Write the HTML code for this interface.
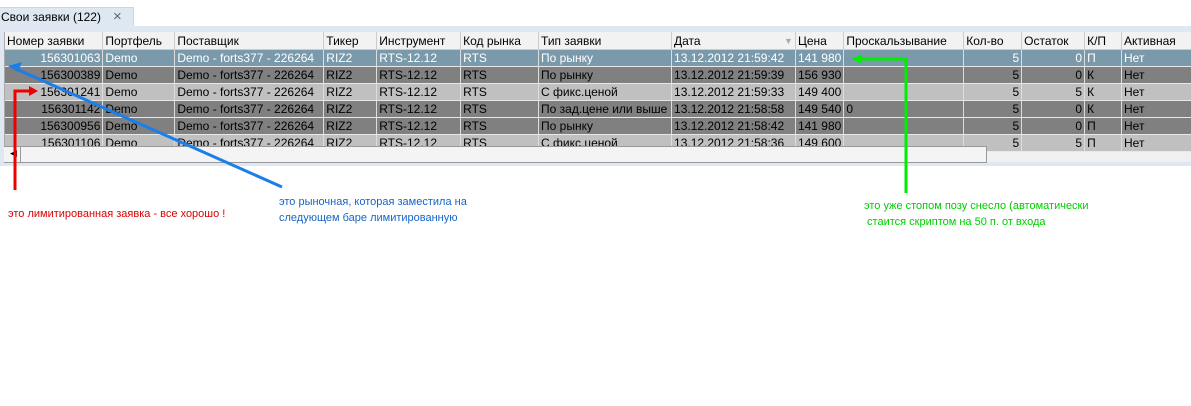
<!DOCTYPE html>
<html><head><meta charset="utf-8"><style>
body{margin:0;width:1191px;height:406px;background:#fff;position:relative;overflow:hidden;font-family:"Liberation Sans","DejaVu Sans",sans-serif;font-size:12px}
.tab{position:absolute;left:0;top:7px;width:133px;height:19px;background:#dde8f3;border-top:1px solid #c8d6e6;border-right:1px solid #c8d6e6}
.tab span{position:absolute;left:1px;top:2px;color:#000}
.tab b{position:absolute;left:113px;top:0px;font-weight:normal;color:#666;font-size:15px}
.frame{position:absolute;left:0;top:26px;width:1191px;height:140px;background:#dfe8f2}
.grid{position:absolute;left:4px;top:32px;width:1187px;height:130px;background:#f0f0f0;overflow:hidden;border-left:1px solid #aaa}
table{border-collapse:collapse;table-layout:fixed;position:absolute;left:0;top:0}
td{height:16px;padding:0 2px;white-space:nowrap;overflow:hidden;border-right:1px solid #ddd;border-bottom:1px solid #e8e8e8;line-height:16px}
tr.h td{height:17px;background:#f2f2f2;border-right:1px solid #ccc;border-bottom:1px solid #ccc;color:#000}
tr.s td{background:#7a9aab;color:#fff}
tr.d td{background:#808080;color:#000}
tr.l td{background:#c0c0c0;color:#000}
.r{text-align:right}
.sb{position:absolute;left:4px;top:146px;width:982px;height:15px;background:#f4f4f4;border:1px solid #999;border-left:none}
.note{position:absolute;font-size:11px;line-height:16px}
</style></head><body>
<div class="tab"><span>Свои заявки (122)</span><b>×</b></div>
<div class="frame"></div>
<div class="grid">
<table>
<colgroup><col style="width:98px"><col style="width:72px"><col style="width:149px"><col style="width:53px"><col style="width:84px"><col style="width:78px"><col style="width:133px"><col style="width:124px"><col style="width:48px"><col style="width:120px"><col style="width:58px"><col style="width:63px"><col style="width:37px"><col style="width:70px"></colgroup>
<tr class="h"><td>Номер заявки</td><td>Портфель</td><td>Поставщик</td><td>Тикер</td><td>Инструмент</td><td>Код рынка</td><td>Тип заявки</td><td>Дата<span style="float:right;color:#aaa;font-size:9px">▼</span></td><td>Цена</td><td>Проскальзывание</td><td>Кол-во</td><td>Остаток</td><td>К/П</td><td>Активная</td></tr>
<tr class="s"><td class="r">156301063</td><td>Demo</td><td>Demo - forts377 - 226264</td><td>RIZ2</td><td>RTS-12.12</td><td>RTS</td><td>По рынку</td><td>13.12.2012 21:59:42</td><td>141 980</td><td></td><td class="r">5</td><td class="r">0</td><td>П</td><td>Нет</td></tr>
<tr class="d"><td class="r">156300389</td><td>Demo</td><td>Demo - forts377 - 226264</td><td>RIZ2</td><td>RTS-12.12</td><td>RTS</td><td>По рынку</td><td>13.12.2012 21:59:39</td><td>156 930</td><td></td><td class="r">5</td><td class="r">0</td><td>К</td><td>Нет</td></tr>
<tr class="l"><td class="r">156301241</td><td>Demo</td><td>Demo - forts377 - 226264</td><td>RIZ2</td><td>RTS-12.12</td><td>RTS</td><td>С фикс.ценой</td><td>13.12.2012 21:59:33</td><td>149 400</td><td></td><td class="r">5</td><td class="r">5</td><td>К</td><td>Нет</td></tr>
<tr class="d"><td class="r">156301142</td><td>Demo</td><td>Demo - forts377 - 226264</td><td>RIZ2</td><td>RTS-12.12</td><td>RTS</td><td>По зад.цене или выше</td><td>13.12.2012 21:58:58</td><td>149 540</td><td>0</td><td class="r">5</td><td class="r">0</td><td>К</td><td>Нет</td></tr>
<tr class="d"><td class="r">156300956</td><td>Demo</td><td>Demo - forts377 - 226264</td><td>RIZ2</td><td>RTS-12.12</td><td>RTS</td><td>По рынку</td><td>13.12.2012 21:58:42</td><td>141 980</td><td></td><td class="r">5</td><td class="r">0</td><td>П</td><td>Нет</td></tr>
<tr class="l"><td class="r">156301106</td><td>Demo</td><td>Demo - forts377 - 226264</td><td>RIZ2</td><td>RTS-12.12</td><td>RTS</td><td>С фикс.ценой</td><td>13.12.2012 21:58:36</td><td>149 600</td><td></td><td class="r">5</td><td class="r">5</td><td>П</td><td>Нет</td></tr>
</table>
</div>
<div class="sb"><span style="position:absolute;left:6px;top:1px;font-size:9px">◀</span><div style="position:absolute;left:16px;top:0;width:1px;height:15px;background:#999"></div></div>
<svg width="1191" height="406" style="position:absolute;left:0;top:0">
<polyline points="15,190 15,91 32,91" fill="none" stroke="#e00" stroke-width="3"/>
<polygon points="38,91 29,86 29,96" fill="#e00"/>
<line x1="282" y1="187" x2="14" y2="68" stroke="#1a7fe8" stroke-width="3"/>
<polygon points="8,66 22,62 18,72" fill="#1a7fe8"/>
<polyline points="906,193 906,59 860,59" fill="none" stroke="#0e0" stroke-width="3"/>
<polygon points="852,59 862,54 862,64" fill="#0e0"/>
</svg>
<div class="note" style="left:8px;top:206px;color:#d00">это лимитированная заявка - все хорошо !</div>
<div class="note" style="left:279px;top:194px;color:#1565c8">это рыночная, которая заместила на<br>следующем баре лимитированную</div>
<div class="note" style="left:864px;top:198px;color:#0c0">это уже стопом позу снесло (автоматически<br>&nbsp;стаится скриптом на 50 п. от входа</div>
</body></html>
